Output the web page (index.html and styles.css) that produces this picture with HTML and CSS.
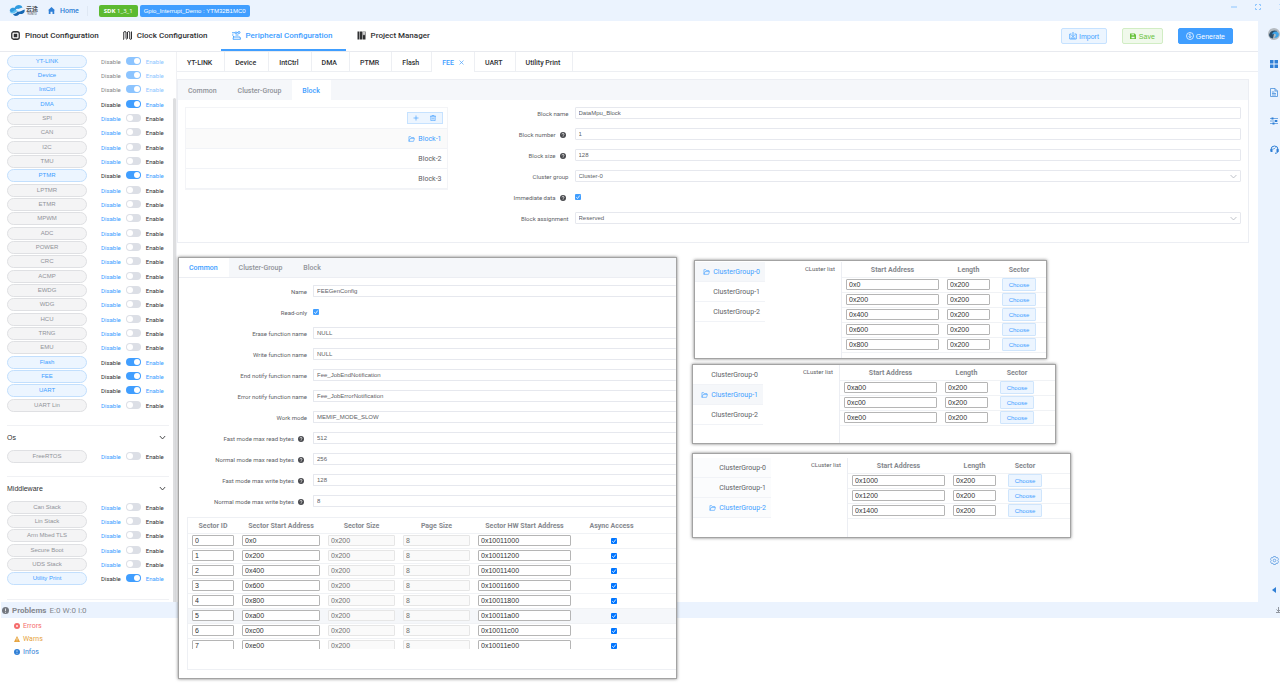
FILE: index.html
```html
<!DOCTYPE html>
<html lang="en">
  <head>
    <meta charset="UTF-8" />
    <meta name="viewport" content="width=device-width, initial-scale=1.0" />
    <title>Peripheral Configuration</title>
    <link rel="stylesheet" href="styles.css">
  </head>
  <body>
    <!-- shared icons -->
    <svg class="sprite" aria-hidden="true">
      <symbol id="i-help" viewBox="0 0 12 12">
        <circle cx="6" cy="6" r="6" fill="#48494d" />
        <path d="M4 4.8a2 2 0 1 1 2.8 1.8c-.6.3-.8.5-.8 1" fill="none" stroke="#fff" stroke-width="1.4" />
        <circle cx="6" cy="9.3" r=".9" fill="#fff" />
      </symbol>
      <symbol id="i-folder" viewBox="0 0 16 14">
        <path d="M2 12.5V1.5h4l1.5 2h6V6M2 12.5L4.5 6H15l-2.3 6.5z" fill="none" stroke="currentColor" stroke-width="1.4" />
      </symbol>
      <symbol id="i-down" viewBox="0 0 12 12">
        <path d="M1.5 3.5L6 8.5l4.5-5" fill="none" stroke="currentColor" stroke-width="1.5" />
      </symbol>
    </svg>

    <header class="topbar">
      <div class="logo">
        <svg width="16" height="13" viewBox="0 0 32 26">
          <path d="M2 15c-2-5 4-9 9-7 3-7 13-8 16-1l-9 3c-3-1-5 1-4 3l-7 5z" fill="#2f9be0" />
          <path d="M31 11c2 6-4 10-10 9-4 5-11 5-13 0 5 0 7-2 9-5 4 1 8-1 14-4z" fill="#1668b3" />
          <path d="M1 17c4 0 8-2 11-5l5 1c-3 5-10 8-16 4z" fill="#5fc2f2" />
        </svg>
        <div class="logo-text"><b>云途</b><small>YUNTU</small></div>
      </div>
      <a class="home" href="#">
        <svg width="7" height="7" viewBox="0 0 14 14"><path d="M7 0l7 6.5h-1.5V14H9V9.5H5V14H1.5V6.5H0z" fill="#2f7fd6" /></svg>
        Home
      </a>
      <span class="tag tag-green"><b>SDK</b> 1_3_1</span>
      <span class="tag tag-blue">Gpio_Interrupt_Demo : YTM32B1MC0</span>
      <div class="window-controls">
        <button aria-label="Minimize"><svg width="6" height="6" viewBox="0 0 12 12"><path d="M0 6h12" stroke="#8cc5ff" stroke-width="2" /></svg></button>
        <button aria-label="Maximize"><svg width="6" height="6" viewBox="0 0 12 12"><path d="M1 4V1h3M8 1h3v3M11 8v3H8M4 11H1V8" fill="none" stroke="#8cc5ff" stroke-width="2" /></svg></button>
        <button aria-label="Close"><svg width="6" height="6" viewBox="0 0 12 12"><path d="M1 1l10 10M11 1L1 11" stroke="#8cc5ff" stroke-width="2" /></svg></button>
      </div>
    </header>

    <div class="shell">
      <div class="workspace">
        <nav class="mainnav">
          <a href="#">
            <svg width="9" height="9" viewBox="0 0 18 18"><rect x="1.5" y="1.5" width="15" height="15" rx="4" fill="none" stroke="#303133" stroke-width="2.6" /><rect x="5.5" y="5.5" width="7" height="7" fill="#303133" /><path d="M6 0v3M9 0v3M12 0v3M6 15v3M9 15v3M12 15v3" stroke="#303133" /></svg>
            Pinout Configuration
          </a>
          <a href="#">
            <svg width="9" height="9" viewBox="0 0 18 18"><path d="M0 16.5h1.5V2q2.5-2 4.5 0v13q1.5 2.5 3 0V2q2.5-2 4.5 0v14q2 1.5 3.5 0V1" fill="none" stroke="#303133" stroke-width="2" /></svg>
            Clock Configuration
          </a>
          <a class="active" href="#">
            <svg width="9" height="9" viewBox="0 0 18 18"><g fill="none" stroke="#409eff" stroke-width="1.8"><path d="M0 3.5h6M10 3.5h2M0 8h3M7 8h6" /><circle cx="8" cy="3.5" r="1.7" /><circle cx="14" cy="3" r="2" /><path d="M3 12h13l1 4.5H2zM2 10.5l2 1" /></g></svg>
            Peripheral Configuration
          </a>
          <a href="#">
            <svg width="9" height="9" viewBox="0 0 18 18"><path d="M1 1h4v16H1zM6 1h4v16H6zM11 1h6v16h-6z" fill="#303133" /><path d="M12.5 1v8l1.5-2 1.5 2V1z" fill="#fff" /></svg>
            Project Manager
          </a>
          <div class="actions">
            <button class="btn btn-import">
              <svg width="8" height="8" viewBox="0 0 16 16"><path d="M5 4H1.5v10h13V4H11M8 0v9M5 6.500L8 9.500l3-3M4 12h8" fill="none" stroke="currentColor" stroke-width="1.6" /></svg>
              Import
            </button>
            <button class="btn btn-save">
              <svg width="6" height="6" viewBox="0 0 12 12"><path d="M0 1h9.500L12 3.500V12H0z" fill="currentColor" /><path d="M3 2.500h5v2H3zM3 7.500h6v3H3z" fill="#f0f9eb" /></svg>
              Save
            </button>
            <button class="btn btn-generate">
              <svg width="8" height="8" viewBox="0 0 16 16"><circle cx="8" cy="8" r="7" fill="none" stroke="#fff" stroke-width="1.5" /><path d="M8 3.500v8M5 8.500l3 3 3-3M5.500 6L8 3.500" fill="none" stroke="#fff" stroke-width="1.5" /></svg>
              Generate
            </button>
          </div>
        </nav>

        <div class="content">
          <aside class="sidebar">
            <section class="group">
              <ul>
                <li class="module on locked"><button>YT-LINK</button><label>Disable <input type="checkbox" checked disabled> <span>Enable</span></label></li>
                <li class="module on locked"><button>Device</button><label>Disable <input type="checkbox" checked disabled> <span>Enable</span></label></li>
                <li class="module on locked"><button>IntCtrl</button><label>Disable <input type="checkbox" checked disabled> <span>Enable</span></label></li>
                <li class="module on"><button>DMA</button><label>Disable <input type="checkbox" checked> <span>Enable</span></label></li>
                <li class="module"><button>SPI</button><label>Disable <input type="checkbox"> <span>Enable</span></label></li>
                <li class="module"><button>CAN</button><label>Disable <input type="checkbox"> <span>Enable</span></label></li>
                <li class="module"><button>I2C</button><label>Disable <input type="checkbox"> <span>Enable</span></label></li>
                <li class="module"><button>TMU</button><label>Disable <input type="checkbox"> <span>Enable</span></label></li>
                <li class="module on"><button>PTMR</button><label>Disable <input type="checkbox" checked> <span>Enable</span></label></li>
                <li class="module"><button>LPTMR</button><label>Disable <input type="checkbox"> <span>Enable</span></label></li>
                <li class="module"><button>ETMR</button><label>Disable <input type="checkbox"> <span>Enable</span></label></li>
                <li class="module"><button>MPWM</button><label>Disable <input type="checkbox"> <span>Enable</span></label></li>
                <li class="module"><button>ADC</button><label>Disable <input type="checkbox"> <span>Enable</span></label></li>
                <li class="module"><button>POWER</button><label>Disable <input type="checkbox"> <span>Enable</span></label></li>
                <li class="module"><button>CRC</button><label>Disable <input type="checkbox"> <span>Enable</span></label></li>
                <li class="module"><button>ACMP</button><label>Disable <input type="checkbox"> <span>Enable</span></label></li>
                <li class="module"><button>EWDG</button><label>Disable <input type="checkbox"> <span>Enable</span></label></li>
                <li class="module"><button>WDG</button><label>Disable <input type="checkbox"> <span>Enable</span></label></li>
                <li class="module"><button>HCU</button><label>Disable <input type="checkbox"> <span>Enable</span></label></li>
                <li class="module"><button>TRNG</button><label>Disable <input type="checkbox"> <span>Enable</span></label></li>
                <li class="module"><button>EMU</button><label>Disable <input type="checkbox"> <span>Enable</span></label></li>
                <li class="module on"><button>Flash</button><label>Disable <input type="checkbox" checked> <span>Enable</span></label></li>
                <li class="module on"><button>FEE</button><label>Disable <input type="checkbox" checked> <span>Enable</span></label></li>
                <li class="module on"><button>UART</button><label>Disable <input type="checkbox" checked> <span>Enable</span></label></li>
                <li class="module"><button>UART Lin</button><label>Disable <input type="checkbox"> <span>Enable</span></label></li>
              </ul>
            </section>
            <section class="group">
              <h3>Os <svg width="7" height="7"><use href="#i-down" /></svg></h3>
              <ul>
                <li class="module"><button>FreeRTOS</button><label>Disable <input type="checkbox"> <span>Enable</span></label></li>
              </ul>
            </section>
            <section class="group">
              <h3>Middleware <svg width="7" height="7"><use href="#i-down" /></svg></h3>
              <ul>
                <li class="module"><button>Can Stack</button><label>Disable <input type="checkbox"> <span>Enable</span></label></li>
                <li class="module"><button>Lin Stack</button><label>Disable <input type="checkbox"> <span>Enable</span></label></li>
                <li class="module"><button>Arm Mbed TLS</button><label>Disable <input type="checkbox"> <span>Enable</span></label></li>
                <li class="module"><button>Secure Boot</button><label>Disable <input type="checkbox"> <span>Enable</span></label></li>
                <li class="module"><button>UDS Stack</button><label>Disable <input type="checkbox"> <span>Enable</span></label></li>
                <li class="module on"><button>Utility Print</button><label>Disable <input type="checkbox" checked> <span>Enable</span></label></li>
              </ul>
            </section>
          </aside>
          <div class="scrollbar"><div class="thumb"></div></div>

          <main>
            <nav class="doctabs">
              <a href="#">YT-LINK</a>
              <a href="#">Device</a>
              <a href="#">IntCtrl</a>
              <a href="#">DMA</a>
              <a href="#">PTMR</a>
              <a href="#">Flash</a>
              <a class="active" href="#">FEE <svg width="5" height="5" viewBox="0 0 10 10"><path d="M1 1l8 8M9 1L1 9" stroke="currentColor" stroke-width="1.3" /></svg></a>
              <a href="#">UART</a>
              <a href="#">Utility Print</a>
            </nav>

            <section class="panel">
              <nav class="tabs">
                <a href="#">Common</a>
                <a href="#">Cluster-Group</a>
                <a class="active" href="#">Block</a>
              </nav>
              <div class="block-body">
                <div class="tree block-tree">
                  <div class="tree-tools">
                    <button aria-label="Add"><svg width="6" height="6" viewBox="0 0 12 12"><path d="M6 1v10M1 6h10" stroke="currentColor" stroke-width="1.3" /></svg></button>
                    <button aria-label="Delete"><svg width="6" height="6" viewBox="0 0 12 12"><path d="M0 2.500h12M4 2.500V.7h4v1.800M1.700 2.500v8.800h8.600V2.500M4.500 5v4M7.500 5v4" fill="none" stroke="currentColor" stroke-width="1.3" /></svg></button>
                  </div>
                  <a class="active" href="#"><svg width="7" height="6"><use href="#i-folder" /></svg>Block-1</a>
                  <a href="#">Block-2</a>
                  <a href="#">Block-3</a>
                </div>
                <form class="form">
                  <label for="block-name">Block name</label>
                  <input type="text" id="block-name" value="DataMpu_Block">
                  <label for="block-number">Block number <svg width="6" height="6"><use href="#i-help" /></svg></label>
                  <input type="text" id="block-number" value="1">
                  <label for="block-size">Block size <svg width="6" height="6"><use href="#i-help" /></svg></label>
                  <input type="text" id="block-size" value="128">
                  <label for="cluster-group">Cluster group</label>
                  <select id="cluster-group"><option>Cluster-0</option></select>
                  <label for="immediate">Immediate data <svg width="6" height="6"><use href="#i-help" /></svg></label>
                  <input type="checkbox" id="immediate" checked>
                  <label for="assignment">Block assignment</label>
                  <select id="assignment"><option>Reserved</option></select>
                </form>
              </div>
            </section>
          </main>
        </div>
      </div>

      <aside class="rail">
        <svg width="12" height="12" viewBox="0 0 24 24"><circle cx="12" cy="12" r="12" fill="#b4bac0" /><path d="M2 14c2-8 9-11 17-8l-7 5-2 10c-4 0-7-3-8-7z" fill="#2c4f6b" /><path d="M8 13c2-6 8-8 13-3 3 7-4 11-9 9 3-2 5-4 3-7-2-1-5 0-7 1z" fill="#3ea4e8" /></svg>
        <svg width="8" height="8" viewBox="0 0 16 16"><path d="M0 0h7v7H0zM9 0h7v7H9zM0 9h7v7H0zM9 9h7v7H9z" fill="#2f7fd6" /></svg>
        <svg width="8" height="9" viewBox="0 0 16 18"><path d="M1 1h9l5 5v11H1zM10 1v5h5M4 8h5M4 11h8M4 14h8" fill="none" stroke="#4a90dc" stroke-width="1.6" /></svg>
        <svg width="8" height="8" viewBox="0 0 16 16"><path d="M0 3h16M0 8h16M0 13h16" stroke="#4a90dc" stroke-width="1.5" /><path d="M3 1h4v4H3zM10 6h4v4h-4zM5 11h4v4H5z" fill="#2f7fd6" /></svg>
        <svg width="9" height="9" viewBox="0 0 18 18"><path d="M2 12V9a7 7 0 0 1 14 0v3c0 3-2 4.500-6 4.500" fill="none" stroke="#2f7fd6" stroke-width="2" /><path d="M1 8h4v6H1zM13 8h4v6h-4z" fill="#2f7fd6" /><path d="M5 8c3 0 5-1 6-3" fill="none" stroke="#2f7fd6" stroke-width="1.5" /></svg>
        <svg class="gear" width="9" height="9" viewBox="0 0 18 18"><path d="M7 1h4l1 2.500 3-.5 2 3.500L15.500 9l1.500 2.500-2 3.500-3-.5-1 2.500H7l-1-2.500-3 .5-2-3.500L2.500 9 1 6.500 3 3l3 .5z" fill="none" stroke="#5b9be0" stroke-width="1.6" /><circle cx="9" cy="9" r="2.6" fill="none" stroke="#5b9be0" stroke-width="1.6" /></svg>
        <svg width="4" height="6" viewBox="0 0 8 12"><path d="M8 0v12L0 6z" fill="#2f7fd6" /></svg>
      </aside>
    </div>

    <footer class="problems">
      <div class="problems-bar">
        <svg width="7" height="7" viewBox="0 0 14 14"><circle cx="7" cy="7" r="7" fill="#737880" /><path d="M7 3v5M7 9.500v2" stroke="#fff" stroke-width="1.6" /></svg>
        <b>Problems</b> E:0 W:0 I:0
        <svg class="dock" width="5" height="6" viewBox="0 0 10 12"><path d="M5 0v9M1 5l4 4 4-4M0 11h10" fill="none" stroke="#737880" stroke-width="1.5" /></svg>
      </div>
      <ul>
        <li class="errors"><svg width="6" height="6" viewBox="0 0 12 12"><circle cx="6" cy="6" r="6" fill="currentColor" /><path d="M4 4l4 4M8 4L4 8" stroke="#fff" stroke-width="1.3" /></svg>Errors</li>
        <li class="warns"><svg width="6" height="6" viewBox="0 0 12 12"><path d="M6 0l6 12H0z" fill="currentColor" /><path d="M6 4v4M6 9v1.500" stroke="#fff" stroke-width="1.3" /></svg>Warns</li>
        <li class="infos"><svg width="6" height="6" viewBox="0 0 12 12"><circle cx="6" cy="6" r="6" fill="currentColor" /><path d="M6 2.500v4M6 8v1.500" stroke="#fff" stroke-width="1.3" /></svg>Infos</li>
      </ul>
    </footer>

    <!-- floating windows -->
    <section class="float float-common">
      <nav class="tabs">
        <a class="active" href="#">Common</a>
        <a href="#">Cluster-Group</a>
        <a href="#">Block</a>
      </nav>
      <form class="form">
        <label for="name">Name</label>
        <input type="text" id="name" value="FEEGenConfig">
        <label for="read-only">Read-only</label>
        <input type="checkbox" id="read-only" checked>
        <label for="erase-fn">Erase function name</label>
        <input type="text" id="erase-fn" value="NULL">
        <label for="write-fn">Write function name</label>
        <input type="text" id="write-fn" value="NULL">
        <label for="end-fn">End notify function name</label>
        <input type="text" id="end-fn" value="Fee_JobEndNotification">
        <label for="error-fn">Error notify function name</label>
        <input type="text" id="error-fn" value="Fee_JobErrorNotification">
        <label for="work-mode">Work mode</label>
        <input type="text" id="work-mode" value="MEMIF_MODE_SLOW">
        <label for="fast-read">Fast mode max read bytes <svg width="6" height="6"><use href="#i-help" /></svg></label>
        <input type="text" id="fast-read" value="512">
        <label for="normal-read">Normal mode max read bytes <svg width="6" height="6"><use href="#i-help" /></svg></label>
        <input type="text" id="normal-read" value="256">
        <label for="fast-write">Fast mode max write bytes <svg width="6" height="6"><use href="#i-help" /></svg></label>
        <input type="text" id="fast-write" value="128">
        <label for="normal-write">Normal mode max write bytes <svg width="6" height="6"><use href="#i-help" /></svg></label>
        <input type="text" id="normal-write" value="8">
      </form>
      <div class="sector-box">
        <div class="sector-scroll">
          <table class="grid sectors">
            <thead>
              <tr><th class="c-id">Sector ID</th><th class="c-start">Sector Start Address</th><th class="c-size">Sector Size</th><th class="c-size">Page Size</th><th class="c-hw">Sector HW Start Address</th><th>Async Access</th></tr>
            </thead>
            <tbody>
              <tr><td><input aria-label="Sector ID" value="0"></td><td><input aria-label="Start address" value="0x0"></td><td><input aria-label="Sector size" value="0x200" disabled></td><td><input aria-label="Page size" value="8" disabled></td><td><input aria-label="HW start address" value="0x10011000"></td><td><input type="checkbox" aria-label="Async access" checked></td></tr>
              <tr><td><input aria-label="Sector ID" value="1"></td><td><input aria-label="Start address" value="0x200"></td><td><input aria-label="Sector size" value="0x200" disabled></td><td><input aria-label="Page size" value="8" disabled></td><td><input aria-label="HW start address" value="0x10011200"></td><td><input type="checkbox" aria-label="Async access" checked></td></tr>
              <tr><td><input aria-label="Sector ID" value="2"></td><td><input aria-label="Start address" value="0x400"></td><td><input aria-label="Sector size" value="0x200" disabled></td><td><input aria-label="Page size" value="8" disabled></td><td><input aria-label="HW start address" value="0x10011400"></td><td><input type="checkbox" aria-label="Async access" checked></td></tr>
              <tr><td><input aria-label="Sector ID" value="3"></td><td><input aria-label="Start address" value="0x600"></td><td><input aria-label="Sector size" value="0x200" disabled></td><td><input aria-label="Page size" value="8" disabled></td><td><input aria-label="HW start address" value="0x10011600"></td><td><input type="checkbox" aria-label="Async access" checked></td></tr>
              <tr><td><input aria-label="Sector ID" value="4"></td><td><input aria-label="Start address" value="0x800"></td><td><input aria-label="Sector size" value="0x200" disabled></td><td><input aria-label="Page size" value="8" disabled></td><td><input aria-label="HW start address" value="0x10011800"></td><td><input type="checkbox" aria-label="Async access" checked></td></tr>
              <tr class="hover"><td><input aria-label="Sector ID" value="5"></td><td><input aria-label="Start address" value="0xa00"></td><td><input aria-label="Sector size" value="0x200" disabled></td><td><input aria-label="Page size" value="8" disabled></td><td><input aria-label="HW start address" value="0x10011a00"></td><td><input type="checkbox" aria-label="Async access" checked></td></tr>
              <tr><td><input aria-label="Sector ID" value="6"></td><td><input aria-label="Start address" value="0xc00"></td><td><input aria-label="Sector size" value="0x200" disabled></td><td><input aria-label="Page size" value="8" disabled></td><td><input aria-label="HW start address" value="0x10011c00"></td><td><input type="checkbox" aria-label="Async access" checked></td></tr>
              <tr><td><input aria-label="Sector ID" value="7"></td><td><input aria-label="Start address" value="0xe00"></td><td><input aria-label="Sector size" value="0x200" disabled></td><td><input aria-label="Page size" value="8" disabled></td><td><input aria-label="HW start address" value="0x10011e00"></td><td><input type="checkbox" aria-label="Async access" checked></td></tr>
            </tbody>
          </table>
        </div>
      </div>
    </section>

    <section class="float float-cluster cluster-0">
      <div class="tree">
        <a class="active" href="#"><svg width="7" height="6"><use href="#i-folder" /></svg>ClusterGroup-0</a>
        <a href="#">ClusterGroup-1</a>
        <a href="#">ClusterGroup-2</a>
      </div>
      <span class="list-label">CLuster list</span>
      <div class="grid-box">
        <table class="grid">
          <thead>
            <tr><th class="c-addr">Start Address</th><th class="c-len">Length</th><th class="c-sector">Sector</th><th></th></tr>
          </thead>
          <tbody>
            <tr><td><input aria-label="Start address" value="0x0"></td><td><input aria-label="Length" value="0x200"></td><td><button class="choose">Choose</button></td><td></td></tr>
            <tr><td><input aria-label="Start address" value="0x200"></td><td><input aria-label="Length" value="0x200"></td><td><button class="choose">Choose</button></td><td></td></tr>
            <tr><td><input aria-label="Start address" value="0x400"></td><td><input aria-label="Length" value="0x200"></td><td><button class="choose">Choose</button></td><td></td></tr>
            <tr><td><input aria-label="Start address" value="0x600"></td><td><input aria-label="Length" value="0x200"></td><td><button class="choose">Choose</button></td><td></td></tr>
            <tr><td><input aria-label="Start address" value="0x800"></td><td><input aria-label="Length" value="0x200"></td><td><button class="choose">Choose</button></td><td></td></tr>
          </tbody>
        </table>
      </div>
    </section>

    <section class="float float-cluster cluster-1">
      <div class="tree">
        <a href="#">ClusterGroup-0</a>
        <a class="active" href="#"><svg width="7" height="6"><use href="#i-folder" /></svg>ClusterGroup-1</a>
        <a href="#">ClusterGroup-2</a>
      </div>
      <span class="list-label">CLuster list</span>
      <div class="grid-box">
        <table class="grid">
          <thead>
            <tr><th class="c-addr">Start Address</th><th class="c-len">Length</th><th class="c-sector">Sector</th><th></th></tr>
          </thead>
          <tbody>
            <tr><td><input aria-label="Start address" value="0xa00"></td><td><input aria-label="Length" value="0x200"></td><td><button class="choose">Choose</button></td><td></td></tr>
            <tr><td><input aria-label="Start address" value="0xc00"></td><td><input aria-label="Length" value="0x200"></td><td><button class="choose">Choose</button></td><td></td></tr>
            <tr><td><input aria-label="Start address" value="0xe00"></td><td><input aria-label="Length" value="0x200"></td><td><button class="choose">Choose</button></td><td></td></tr>
          </tbody>
        </table>
      </div>
    </section>

    <section class="float float-cluster cluster-2">
      <div class="tree">
        <a href="#">ClusterGroup-0</a>
        <a href="#">ClusterGroup-1</a>
        <a class="active" href="#"><svg width="7" height="6"><use href="#i-folder" /></svg>ClusterGroup-2</a>
      </div>
      <span class="list-label">CLuster list</span>
      <div class="grid-box">
        <table class="grid">
          <thead>
            <tr><th class="c-addr">Start Address</th><th class="c-len">Length</th><th class="c-sector">Sector</th><th></th></tr>
          </thead>
          <tbody>
            <tr><td><input aria-label="Start address" value="0x1000"></td><td><input aria-label="Length" value="0x200"></td><td><button class="choose">Choose</button></td><td></td></tr>
            <tr><td><input aria-label="Start address" value="0x1200"></td><td><input aria-label="Length" value="0x200"></td><td><button class="choose">Choose</button></td><td></td></tr>
            <tr><td><input aria-label="Start address" value="0x1400"></td><td><input aria-label="Length" value="0x200"></td><td><button class="choose">Choose</button></td><td></td></tr>
          </tbody>
        </table>
      </div>
    </section>
  </body>
</html>
```
FILE: styles.css
```css
* {
  box-sizing: border-box;
}

body {
  margin: 0;
  position: relative;
  min-height: 100vh;
  overflow: hidden;
  font-family: Roboto, "Open Sans", "Noto Sans CJK SC", sans-serif;
  font-size: 7px;
  color: #303133;
  background-color: #fff;
}

a {
  color: inherit;
  text-decoration: none;
}

ul {
  list-style: none;
  margin: 0;
  padding: 0;
}

button,
input,
select {
  font-family: "Liberation Sans", Arial, sans-serif;
  font-size: 6px;
  margin: 0;
}

button {
  cursor: pointer;
}

svg {
  flex: none;
}

.sprite {
  display: none;
}

/* top bar */
.topbar {
  display: flex;
  align-items: center;
  height: 21px;
  padding-left: 9px;
  background-color: #ebf3fe;
  overflow: hidden;
}

.logo {
  display: flex;
  align-items: center;
  gap: 1px;
  width: 39px;
}

.logo-text {
  display: flex;
  flex-direction: column;
  align-items: center;
  color: #45484d;
}

.logo-text b {
  font-size: 6px;
  line-height: 7px;
}

.logo-text small {
  font-size: 3px;
  line-height: 4px;
}

.home {
  display: flex;
  align-items: center;
  gap: 5px;
  height: 10px;
  padding-right: 8px;
  margin-right: 11px;
  border-right: 1px solid #dfe8f4;
  color: #2f7fd6;
  font-weight: 500;
}

.tag {
  height: 12px;
  line-height: 12px;
  padding: 0 5px;
  margin-right: 2px;
  border-radius: 2px;
  color: #fff;
  font-size: 6px;
}

.tag-green {
  background-color: #5cba31;
  font-family: "Open Sans", sans-serif;
}

.tag-blue {
  padding: 0 4px;
  background-color: #409eff;
  font-family: "Liberation Sans", Arial, sans-serif;
}

.window-controls {
  display: flex;
  gap: 18px;
  margin-left: auto;
  margin-right: -5px;
  padding-bottom: 8px;
}

.window-controls button {
  display: flex;
  padding: 0;
  border: none;
  background: none;
}

/* shell */
.shell {
  display: flex;
}

.workspace {
  flex: 1;
  min-width: 0;
}

.content {
  display: flex;
}

.mainnav {
  display: flex;
  height: 31px;
  border-bottom: 1px solid #e8eaef;
  font-size: 8px;
  font-weight: 500;
}

.mainnav a {
  display: flex;
  align-items: center;
  gap: 5px;
  padding: 1px 13px 0 11px;
  border-bottom: 2px solid transparent;
  white-space: nowrap;
}

.mainnav .active {
  color: #409eff;
  border-color: #409eff;
}

.actions {
  display: flex;
  align-items: center;
  gap: 15px;
  margin-left: auto;
  padding-right: 25px;
}

.btn {
  display: flex;
  align-items: center;
  gap: 2px;
  height: 16px;
  padding: 0 7px;
  border: 1px solid;
  border-radius: 2px;
  font-size: 7px;
}

.btn-import {
  color: #409eff;
  background-color: #ecf5ff;
  border-color: #c6e2ff;
}

.btn-save {
  gap: 3px;
  color: #67c23a;
  background-color: #f0f9eb;
  border-color: #d1edc4;
}

.btn-generate {
  color: #fff;
  background-color: #409eff;
  border-color: #409eff;
}

/* sidebar */
.sidebar {
  width: 173px;
  padding: 2px 4px 2px 7px;
}

.group {
  padding-bottom: 13px;
  border-bottom: 1px solid #f0f1f4;
}

.group h3 {
  display: flex;
  align-items: center;
  justify-content: space-between;
  height: 23px;
  margin: 0;
  padding-right: 3px;
  font-family: "Liberation Sans", Arial, sans-serif;
  font-size: 7px;
  font-weight: 400;
}

.module {
  display: flex;
  align-items: center;
  gap: 14px;
  height: 14px;
}

.module:nth-child(3n) {
  margin-bottom: 1px;
}

.module button {
  width: 80px;
  height: 13px;
  padding: 0;
  border: 1px solid #dfe0e3;
  border-radius: 7px;
  background-color: #f4f4f5;
  color: #909399;
}

.module.on button {
  border-color: #c2dffd;
  background-color: #ecf5ff;
  color: #409eff;
}

.module label {
  display: flex;
  align-items: center;
  gap: 5px;
  font-size: 6px;
  color: #409eff;
}

.module label span {
  color: #303133;
}

.module.on label {
  color: #303133;
}

.module.on label span {
  color: #409eff;
}

.module.locked label {
  opacity: 0.6;
}

.module input {
  display: flex;
  align-items: center;
  appearance: none;
  width: 15px;
  height: 8px;
  padding: 1px;
  border-radius: 4px;
  background-color: #dcdfe6;
}

.module input::before {
  content: "";
  width: 6px;
  height: 6px;
  border-radius: 50%;
  background-color: #fff;
}

.module input:checked {
  justify-content: flex-end;
  background-color: #409eff;
}

.scrollbar {
  width: 4px;
  padding-top: 46px;
  border-right: 1px solid #f0f1f4;
}

.thumb {
  height: 100%;
  background-color: #dddee0;
  border-radius: 2px 2px 0 0;
}

/* document tabs */
main {
  flex: 1;
  min-width: 0;
}

.doctabs {
  display: flex;
  height: 20px;
  font-weight: 500;
  border-bottom: 1px solid #edeff3;
}

.doctabs a {
  display: flex;
  align-items: center;
  gap: 5px;
  height: 20px;
  padding: 1px 12px 0 10px;
  border-right: 1px solid #edeff3;
}

.doctabs .active {
  padding-right: 10px;
  color: #409eff;
  background-color: #fff;
}

.panel {
  margin: 7px 9px 0 0;
  border: 1px solid #eceef3;
}

.tabs {
  display: flex;
  height: 20px;
  background-color: #f5f7fa;
  color: #909399;
  font-weight: 500;
}

.tabs a {
  display: flex;
  align-items: center;
  padding: 1px 11px 0 10px;
}

.tabs .active {
  color: #409eff;
  background-color: #fff;
}

.block-body {
  display: grid;
  grid-template-columns: 1fr 3fr;
  gap: 6px;
  align-items: start;
  padding: 7px 7px 18px;
}

.tree a {
  display: flex;
  align-items: center;
  justify-content: flex-end;
  gap: 3px;
  height: 20px;
  padding-right: 5px;
  border-bottom: 1px solid #f1f3f7;
  color: #606266;
}

.tree .active {
  color: #409eff;
  background-color: #f5f7fa;
}

.block-tree {
  border: 1px solid #f3f4f7;
}

.block-tree .active {
  background-color: #fafafa;
}

.tree-tools {
  display: flex;
  justify-content: flex-end;
  align-items: center;
  height: 21px;
  padding-right: 4px;
  border-bottom: 1px solid #f1f3f7;
}

.tree-tools button {
  display: flex;
  align-items: center;
  justify-content: center;
  width: 18px;
  height: 12px;
  padding: 0;
  border: 1px solid #c6e2ff;
  background-color: #ecf5ff;
  color: #409eff;
}

.tree-tools button:first-child {
  border-right: none;
}

.tree-tools button:last-child {
  border-left: none;
}

/* forms */
.form {
  display: grid;
  grid-template-columns: 115px 1fr;
  grid-auto-rows: 12px;
  gap: 9px 6px;
  align-items: center;
}

.form label {
  display: flex;
  align-items: center;
  justify-content: flex-end;
  gap: 4px;
  padding-top: 1px;
  font-size: 6px;
  color: #606266;
  white-space: nowrap;
}

.form label svg {
  margin-right: 3px;
}

.form input[type="text"],
.form select {
  width: 100%;
  height: 12px;
  padding: 0 3px;
  border: 1px solid #e6e8ee;
  border-radius: 1px;
  background-color: #fff;
  color: #606266;
}

.form select {
  appearance: none;
  background-image: url("data:image/svg+xml,%3Csvg xmlns='http://www.w3.org/2000/svg' viewBox='0 0 12 12'%3E%3Cpath d='M1 3.500l5 5 5-5' fill='none' stroke='%23b4b8c0' stroke-width='1.500'/%3E%3C/svg%3E");
  background-repeat: no-repeat;
  background-position: right 3px center;
  background-size: 7px 7px;
}

.form input[type="checkbox"],
.grid input[type="checkbox"] {
  appearance: none;
  width: 6px;
  height: 6px;
  border: none;
  border-radius: 1px;
  background-color: #409eff;
  background-image: url("data:image/svg+xml,%3Csvg xmlns='http://www.w3.org/2000/svg' viewBox='0 0 12 12'%3E%3Cpath d='M2.500 6.500l2.500 2.500 4.500-6' fill='none' stroke='%23fff' stroke-width='1.600'/%3E%3C/svg%3E");
}

/* floating windows */
.float {
  position: absolute;
  border: 1px solid #a3a3a3;
  background-color: #fff;
  box-shadow: 0 0 3px rgba(0, 0, 0, 0.5);
  overflow: hidden;
}

.float-common {
  left: 178px;
  top: 257px;
  width: 499px;
  padding-bottom: 8px;
}

.float-common .tabs {
  border-bottom: 1px solid #eceef3;
}

.float-common .form {
  grid-template-columns: 128px 1fr;
  margin-top: 7px;
}

.float-common .form input[type="text"] {
  border-right: none;
}

.sector-box {
  margin: 10px 0 0 8px;
  padding-bottom: 20px;
  border: 1px solid #eef0f4;
  border-right: none;
}

.sector-scroll {
  height: 131px;
  overflow: hidden;
}

.grid {
  width: 100%;
  table-layout: fixed;
  border-collapse: collapse;
}

.grid tr {
  height: 15px;
}

.grid th {
  padding: 2px 0 0;
  border-bottom: 1px solid #f0f2f5;
  color: #85888e;
  font-size: 7px;
  font-weight: 700;
  line-height: 12px;
}

.grid td {
  height: 15px;
  padding: 0 4px;
  border-bottom: 1px solid #f0f2f5;
  text-align: center;
  line-height: 0;
}

.grid input {
  width: 100%;
  height: 11px;
  padding: 0 2px;
  border: 1px solid #b5b5b5;
  border-radius: 1px;
  background-color: #fff;
  color: #303133;
  font-size: 7px;
}

.grid input:disabled {
  background-color: #fafafa;
  border-color: #e6e6e6;
  color: #707070;
}

.grid input[type="checkbox"] {
  background-color: #0075ff;
  vertical-align: middle;
}

.grid .hover {
  background-color: #f5f7fa;
}

.sectors th:last-child,
.sectors td:last-child {
  padding-right: 28px;
}

.c-id {
  width: 50px;
}

.c-start {
  width: 86px;
}

.c-size {
  width: 75px;
}

.c-hw {
  width: 101px;
}

.c-addr {
  width: 101px;
}

.c-len {
  width: 51px;
}

.c-sector {
  width: 50px;
}

.float-cluster {
  display: grid;
  grid-template-columns: 70px 70px 1fr;
}

.list-label {
  padding-top: 3px;
  font-size: 6px;
  color: #606266;
  text-align: right;
}

.grid-box {
  margin-left: 6px;
  border-left: 1px solid #eceef3;
}

.choose {
  width: 34px;
  height: 13px;
  padding: 0;
  border: 1px solid #cfe5fc;
  border-radius: 1px;
  background-color: #ecf5ff;
  color: #409eff;
  vertical-align: middle;
}

.cluster-0 {
  left: 694px;
  top: 260px;
  width: 353px;
  min-height: 99px;
  padding-top: 1px;
}

.cluster-1 {
  left: 692px;
  top: 364px;
  width: 364px;
  min-height: 80px;
}

.cluster-2 {
  left: 692px;
  top: 453px;
  width: 379px;
  min-height: 85px;
  padding-top: 4px;
  grid-template-columns: 78px 70px 1fr;
}

.cluster-2 .tree a {
  background-color: #fbfcfd;
}

/* right rail */
.rail {
  display: flex;
  flex-direction: column;
  align-items: center;
  gap: 20px;
  width: 22px;
  padding: 7px 0 9px 10px;
  background-color: #ebf3fe;
}

.gear {
  margin-top: auto;
  margin-bottom: 2px;
}

/* problems */
.problems-bar {
  display: flex;
  align-items: center;
  gap: 3px;
  height: 16px;
  margin-left: 1px;
  padding-left: 1px;
  background-color: #ebf3fe;
  color: #85888e;
  font-size: 8px;
}

.dock {
  margin-left: auto;
  margin-right: -1px;
}

.problems ul {
  padding: 1px 0 0 14px;
}

.problems li {
  display: flex;
  align-items: center;
  gap: 3px;
  height: 13px;
}

.errors {
  color: #f56c6c;
}

.warns {
  color: #e6a23c;
}

.infos {
  color: #2f7fd6;
}
```
